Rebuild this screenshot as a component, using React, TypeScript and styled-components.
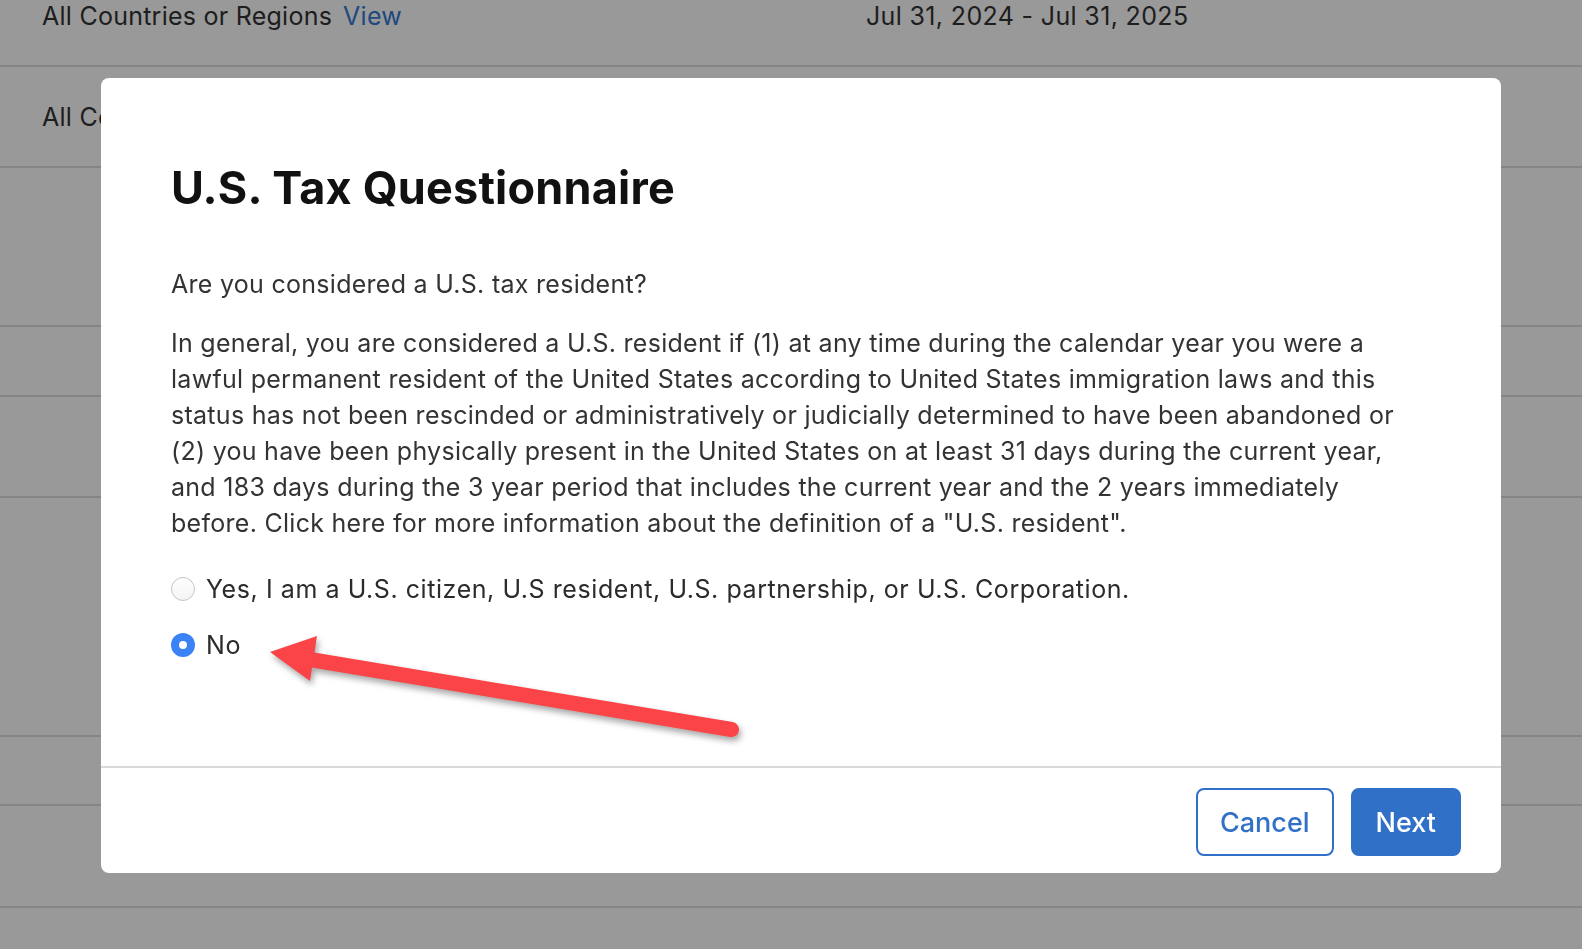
import React from 'react'
import styled, { createGlobalStyle } from 'styled-components'

const GlobalStyle = createGlobalStyle`
  html, body {
    margin: 0;
    padding: 0;
    overflow: hidden;
    background: #ffffff;
    font-family: Inter, "Liberation Sans", sans-serif;
  }
`

const Page = styled.div`
  width: 100%;
  height: 949px;
  overflow: hidden;
  background: #ffffff;
`

// the table behind the dialog is scrolled a little
const Table = styled.div`
  margin-top: -34px;
`

const Row = styled.div<{ $h: number }>`
  height: ${(p) => p.$h}px;
  box-sizing: border-box;
  border-bottom: 2px solid #dedede;
  display: flex;
  align-items: center;
  padding-left: 42px;
  font-size: 25px;
  letter-spacing: 0.35px;
  color: #333333;
`

const RegionCell = styled.div`
  width: 824px;
  display: flex;
  gap: 11px;
  letter-spacing: 0.25px;
`

const ViewLink = styled.span`
  color: #3478d4;
`

const DateCell = styled.div`
  width: 340px;
`

const StatusCell = styled.div`
  display: flex;
  align-items: center;
  gap: 8px;
  padding-top: 62px;
`

const Dot = styled.span`
  width: 12px;
  height: 12px;
  border-radius: 50%;
  background: #f5c542;
`

const Overlay = styled.div`
  position: fixed;
  inset: 0;
  background: rgba(0, 0, 0, 0.4);
  display: flex;
  align-items: center;
  justify-content: center;
  padding: 2px 0 0 20px;
`

const Modal = styled.div`
  width: 1400px;
  height: 795px;
  background: #ffffff;
  border-radius: 8px;
  display: flex;
  flex-direction: column;
  overflow: hidden;
`

const Body = styled.div`
  position: relative;
  flex: 1;
  padding: 82px 90px 0 70px;
`

const Title = styled.h1`
  margin: 0;
  font-size: 45px;
  line-height: 56px;
  font-weight: 700;
  color: #111111;
  letter-spacing: 0.2px;
`

const Question = styled.p`
  margin: 50px 0 0;
  font-size: 25px;
  line-height: 36px;
  letter-spacing: 0.28px;
  color: #333333;
`

const Paragraph = styled.p`
  margin: 23px 0 0;
  font-size: 25px;
  line-height: 36px;
  letter-spacing: 0.28px;
  color: #333333;
`

const Options = styled.div`
  margin-top: 30px;
  display: flex;
  flex-direction: column;
  gap: 20px;
`

const Option = styled.label`
  display: flex;
  align-items: center;
  gap: 11px;
  height: 36px;
  font-size: 25px;
  letter-spacing: 0.57px;
  color: #2b2b2b;
`

const Radio = styled.span<{ $checked?: boolean }>`
  width: 24px;
  height: 24px;
  box-sizing: border-box;
  border-radius: 50%;
  position: relative;
  flex-shrink: 0;
  border: ${(p) => (p.$checked ? 'none' : '1px solid #c6c6c6')};
  background: ${(p) => (p.$checked ? '#3a82f6' : 'linear-gradient(#ffffff, #f3f3f3)')};
  &::after {
    content: '';
    display: ${(p) => (p.$checked ? 'block' : 'none')};
    position: absolute;
    left: 8px;
    top: 8px;
    width: 8px;
    height: 8px;
    border-radius: 50%;
    background: #ffffff;
  }
`

const ArrowMark = styled.svg`
  position: absolute;
  left: 162px;
  top: 550px;
  overflow: visible;
  filter: drop-shadow(2px 4px 3px rgba(0, 0, 0, 0.35));
`

const Footer = styled.div`
  border-top: 2px solid #d9d9d9;
  display: flex;
  justify-content: flex-end;
  gap: 17px;
  padding: 20px 40px 17px;
`

const Button = styled.button<{ $primary?: boolean }>`
  height: 68px;
  box-sizing: border-box;
  padding: 0 ${(p) => (p.$primary ? 23 : 22)}px;
  border-radius: 8px;
  border: 2px solid #3070c6;
  background: ${(p) => (p.$primary ? '#3070c6' : '#ffffff')};
  color: ${(p) => (p.$primary ? '#ffffff' : '#3070c6')};
  font-family: Inter, "Liberation Sans", sans-serif;
  font-size: 27px;
  font-weight: 500;
`

const rows = [101, 101, 159, 70, 101, 239, 69, 102, 101]

export default function App() {
  return (
    <Page>
      <GlobalStyle />
      <Table>
        {rows.map((h, i) => (
          <Row key={i} $h={h}>
            {i < 2 && (
              <>
                <RegionCell>
                  All Countries or Regions <ViewLink>View</ViewLink>
                </RegionCell>
                <DateCell>Jul 31, 2024 - Jul 31, 2025</DateCell>
              </>
            )}
            {i === 8 && (
              <>
                <RegionCell />
                <DateCell />
                <StatusCell>
                  <Dot /> Missing Tax Info
                </StatusCell>
              </>
            )}
          </Row>
        ))}
      </Table>

      <Overlay>
        <Modal>
          <Body>
            <Title>U.S. Tax Questionnaire</Title>
            <Question>Are you considered a U.S. tax resident?</Question>
            <Paragraph>
              In general, you are considered a U.S. resident if (1) at any time during the calendar year you were a
              lawful permanent resident of the United States according to United States immigration laws and this
              status has not been rescinded or administratively or judicially determined to have been abandoned or
              (2) you have been physically present in the United States on at least 31 days during the current year,
              and 183 days during the 3 year period that includes the current year and the 2 years immediately
              before. Click here for more information about the definition of a "U.S. resident".
            </Paragraph>
            <Options>
              <Option>
                <Radio />
                Yes, I am a U.S. citizen, U.S resident, U.S. partnership, or U.S. Corporation.
              </Option>
              <Option>
                <Radio $checked />
                No
              </Option>
            </Options>
            <ArrowMark width="480" height="110" viewBox="0 0 480 110">
              <line x1="50" y1="32" x2="468.5" y2="101.5" stroke="#fb4447" strokeWidth="15" strokeLinecap="round" />
              <polygon points="7,24 54,8 47,53" fill="#fb4447" />
            </ArrowMark>
          </Body>
          <Footer>
            <Button>Cancel</Button>
            <Button $primary>Next</Button>
          </Footer>
        </Modal>
      </Overlay>
    </Page>
  )
}
